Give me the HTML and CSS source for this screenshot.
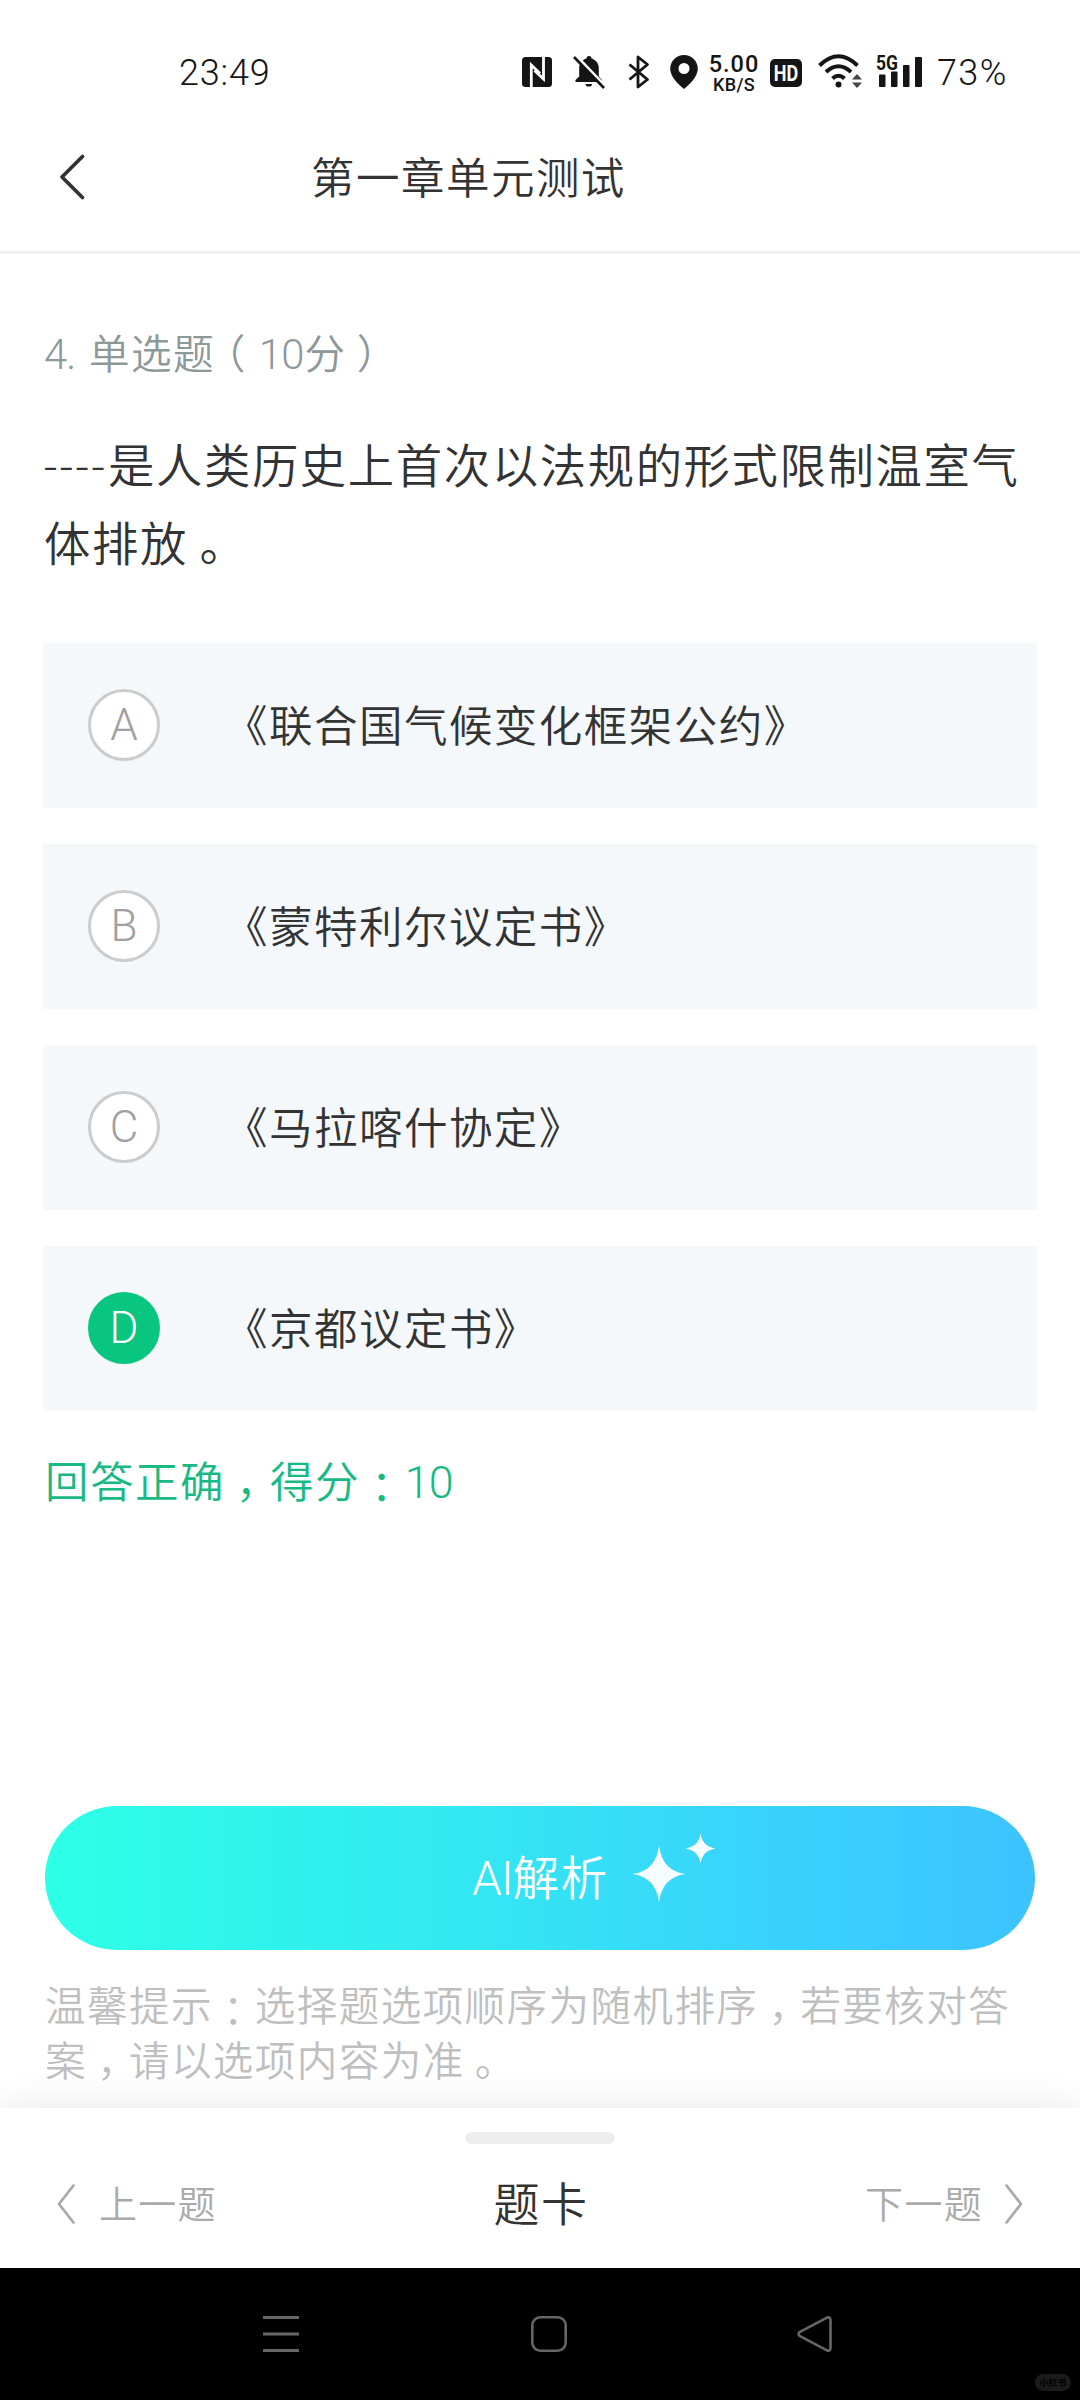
FILE: index.html
```html
<!DOCTYPE html>
<html lang="zh-CN">
<head>
<meta charset="utf-8">
<title>第一章单元测试</title>
<link rel="stylesheet" href="styles.css">
</head>
<body>
<div class="statusbar">
  <span class="clock">23:49</span>
  <div class="indicators">
    <svg class="i-nfc" width="30" height="30" viewBox="0 0 30 30"><rect width="30" height="30" rx="3.5" fill="#151515"/><path d="M9.300 30V8L18 16.500M21.500 0V22L12.500 13.500" fill="none" stroke="#fff" stroke-width="2.800"/></svg>
    <svg class="i-bell" width="32" height="34" viewBox="0 0 32 34"><path d="M16 1c1.600 0 2.500 1 2.500 2.400 4.500 1.300 7.300 5 7.300 9.600v8.500l3.200 3.500v2H2.500v-2l3.700-3.500V13c0-4.600 2.800-8.300 7.300-9.600C13.500 2 14.400 1 16 1zM12.500 29h6.500a3.200 2.500 0 0 1-6.500 0z" fill="#151515"/><path d="M2.500 0L32.500 31.500" stroke="#fff" stroke-width="3"/><path d="M1 2L31 33" stroke="#151515" stroke-width="2.600"/></svg>
    <svg class="i-bt" width="22" height="34" viewBox="0 0 22 34"><path d="M1.500 9.500L19.500 24.500L10 32V2L19.500 9.500L1.500 24.500" fill="none" stroke="#151515" stroke-width="2.800" stroke-linejoin="round"/></svg>
    <svg class="i-pin" width="28" height="34" viewBox="0 0 28 34"><path fill-rule="evenodd" d="M14 0a13.800 13.800 0 0 1 13.800 13.800C27.800 22 19 30 14 34 9 30 .2 22 .2 13.800A13.800 13.800 0 0 1 14 0zm0 8a5.500 5.500 0 1 0 0 11 5.500 5.500 0 0 0 0-11z" fill="#151515"/></svg>
    <div class="speed"><span class="rate">5.00</span><span class="unit">KB/S</span></div>
    <span class="hd"><span>HD</span></span>
    <svg class="i-wifi" width="46" height="36" viewBox="0 0 46 36"><g fill="none" stroke="#151515" stroke-width="4"><path d="M1.500 11.500Q20.500-7 39.500 11.500"/><path d="M8 18Q20.500 6.500 33 18"/><path d="M14.500 24.500Q20.500 19 26.500 24.500"/></g><circle cx="20.500" cy="30.500" r="3" fill="#151515"/><path d="M34 25.500l5-5.500 5 5.500zM34 28.500h10l-5 5.500z" fill="#444"/></svg>
    <svg class="i-signal" width="48" height="34" viewBox="0 0 48 34"><g fill="#151515"><rect x="3" y="20.500" width="6.500" height="12.500" rx="1"/><rect x="15" y="17.500" width="6.500" height="15.500" rx="1"/><rect x="27" y="11" width="6.500" height="22" rx="1"/><rect x="39" y="3" width="7" height="30" rx="1"/></g><text class="net" x="0" y="16" textLength="22" lengthAdjust="spacingAndGlyphs">5G</text></svg>
    <span class="battery">73%</span>
  </div>
</div>

<header class="header">
  <svg class="back" width="26" height="46" viewBox="0 0 26 46"><path d="M23.500 2.500L3 23L23.500 43.500" fill="none" stroke="#333" stroke-width="3.800" stroke-linecap="round" stroke-linejoin="round"/></svg>
  <h1 class="title">第一章单元测试</h1>
</header>

<main class="content">
  <p class="type"><span class="latin num">4.</span>单选题<span class="punct">（</span><span class="latin score">10</span>分<span class="punct">）</span></p>
  <p class="question"><span class="dashes">----</span>是人类历史上首次以法规的形式限制温室气<br>体排放<span class="punct">。</span></p>
  <ul class="options">
    <li class="option"><span class="mark">A</span><span class="answer">《联合国气候变化框架公约》</span></li>
    <li class="option"><span class="mark">B</span><span class="answer">《蒙特利尔议定书》</span></li>
    <li class="option"><span class="mark">C</span><span class="answer">《马拉喀什协定》</span></li>
    <li class="option"><span class="mark chosen">D</span><span class="answer">《京都议定书》</span></li>
  </ul>
  <p class="result">回答正确<span class="punct">，</span>得分<span class="punct colon">：</span><span class="latin">10</span></p>
  <button class="ai">
    <span class="label"><span class="latin">AI</span>解析</span>
    <svg width="84" height="70" viewBox="0 0 84 70" fill="#f6fcff"><path d="M27 13Q30.500 38 53.500 41Q30.500 44 27 69Q23.500 44 .5 41Q23.500 38 27 13z"/><path d="M68.500.5Q70.500 13.500 83.500 15.500Q70.500 17.500 68.500 30.500Q66.500 17.500 53.500 15.500Q66.500 13.500 68.500.5z"/></svg>
  </button>
  <p class="tip">温馨提示<span class="punct colon">：</span>选择题选项顺序为随机排序<span class="punct">，</span>若要核对答<br>案<span class="punct">，</span>请以选项内容为准<span class="punct">。</span></p>
</main>

<footer class="sheet">
  <div class="handle"></div>
  <div class="pager">
    <div class="step"><svg width="18" height="40" viewBox="0 0 18 40"><path d="M16.500 1.500L2 20L16.500 38.500" fill="none" stroke="#aaa" stroke-width="2.800" stroke-linecap="round" stroke-linejoin="round"/></svg><span>上一题</span></div>
    <span class="card">题卡</span>
    <div class="step next"><span>下一题</span><svg width="18" height="40" viewBox="0 0 18 40"><path d="M1.500 1.500L16 20L1.500 38.500" fill="none" stroke="#aaa" stroke-width="2.800" stroke-linecap="round" stroke-linejoin="round"/></svg></div>
  </div>
</footer>

<nav class="sysnav">
  <svg width="36" height="36" viewBox="0 0 36 36"><path d="M0 1.500H36M0 18H36M0 34.500H36" stroke="#666" stroke-width="3"/></svg>
  <svg width="38" height="36" viewBox="0 0 38 36"><rect x="3.300" y="1.300" width="33.400" height="33.400" rx="8" fill="none" stroke="#666" stroke-width="2.600"/></svg>
  <svg width="36" height="36" viewBox="0 0 36 36"><path d="M29.500 1.800Q33.500.2 33.500 4.500V31.500Q33.500 35.800 29.500 34.200L3 20.200Q.2 18 3 15.800z" fill="none" stroke="#666" stroke-width="2.600" stroke-linejoin="round"/></svg>
  <span class="watermark">小红书</span>
</nav>
</body>
</html>
```
FILE: styles.css
```css
* { box-sizing: border-box; margin: 0; padding: 0; }

body {
  width: 1080px;
  height: 2400px;
  display: flex;
  flex-direction: column;
  background: #fff;
  color: #333;
  font-family: "Noto Sans CJK SC", sans-serif;
  font-weight: 350;
  text-spacing-trim: space-all;
  overflow: hidden;
}
svg { display: block; flex: none; overflow: visible; }
.title, .type, .question, .answer, .result, .label, .tip, .step, .card { letter-spacing: .034em; }

/* system status bar */
.statusbar {
  height: 104px;
  padding: 40px 0 0 179px;
  display: flex;
  align-items: flex-start;
  color: #151515;
  font-family: Roboto, sans-serif;
}
.clock, .battery { font-size: 36px; line-height: 66px; font-weight: 300; letter-spacing: .8px; }
.clock { width: 343px; }
.indicators { display: flex; align-items: flex-start; }
.i-nfc { margin-top: 17px; }
.i-bell { margin: 15px 0 0 21px; }
.i-bt { margin: 15px 0 0 23px; }
.i-pin { margin: 15px 0 0 20px; }
.speed {
  width: 52px;
  margin: 13px 0 0 10px;
  display: flex;
  flex-direction: column;
  align-items: center;
  font-weight: 500;
}
.rate { font-size: 23.5px; line-height: 23px; letter-spacing: 1px; }
.unit { font-size: 18px; line-height: 17px; letter-spacing: .3px; }
.hd {
  width: 32px;
  height: 28px;
  margin: 19px 0 0 10px;
  border-radius: 5px;
  background: #151515;
  color: #fff;
  display: flex;
  align-items: center;
  justify-content: center;
  font-size: 22px;
  font-weight: 700;
}
.hd span { transform: scaleX(.82); }
.i-wifi { margin: 14px 0 0 16px; }
.i-signal { margin: 14px 0 0 12px; }
.net {
  font-size: 21px;
  font-weight: 700;
  fill: #151515;
  stroke: #fff;
  stroke-width: 2px;
  paint-order: stroke;
}
.battery { margin-left: 13px; letter-spacing: 1.4px; }

/* page header */
.header {
  height: 150px;
  border-bottom: 3px solid #f1f1f1;
  padding-left: 59px;
  display: flex;
  align-items: center;
}
.back { margin-bottom: 1px; }
.title {
  margin: 0 0 3px 226px;
  font-size: 43.5px;
  line-height: 60px;
  font-weight: inherit;
}

.content { height: 1854px; padding: 68px 43px 0; }
.latin {
  font-family: Roboto, sans-serif;
  font-size: 1.03em;
  line-height: 0;
  letter-spacing: -.02em;
}
/* half-width punctuation glyphs centred in a full-width cell */
.punct {
  padding: 0 .25em;
  font-feature-settings: "halt";
}
.colon { vertical-align: -3px; line-height: 0; }

.type {
  height: 60px;
  padding-left: 1px;
  font-size: 40.6px;
  line-height: 60px;
  color: #8d9899;
}
.num { display: inline-block; width: 45px; }
.score { margin: 0 1px 0 2px; }
.question {
  height: 156px;
  margin-top: 42px;
  padding-left: 1px;
  font-size: 46.4px;
  line-height: 78px;
  white-space: nowrap;
}
.dashes {
  display: inline-block;
  width: 64px;
  font-family: Roboto, sans-serif;
  line-height: 1;
  letter-spacing: 2.500px;
}

.options { margin-top: 63px; display: grid; gap: 36px; list-style: none; }
.option {
  height: 165px;
  padding-left: 45px;
  display: flex;
  align-items: center;
  gap: 63px;
  background: #f4f8fb;
  font-size: 43.5px;
}
.answer { margin: 0 0 5px 1px; }
.mark {
  width: 72px;
  height: 72px;
  margin-bottom: 1px;
  border: 3px solid #ccc;
  border-radius: 50%;
  background: #fff;
  color: #a0a0a0;
  display: flex;
  align-items: center;
  justify-content: center;
  font: 350 44px/66px Roboto, sans-serif;
}
.chosen { background: #08c67f; border-color: #08c67f; color: #fff; }
.result {
  height: 60px;
  margin-top: 39px;
  padding-left: 2px;
  font-size: 43.5px;
  line-height: 60px;
  color: #19b983;
}

.ai {
  width: 990px;
  height: 144px;
  margin: 296px 0 0 2px;
  border: 0;
  border-radius: 72px;
  background: linear-gradient(90deg, #2dffe6, #33e6f2 45%, #39d3fc 72%, #3cc3ff);
  color: #fff;
  display: flex;
  padding-left: 427px;
  align-items: center;
  font: inherit;
  font-size: 46.400px;
}
.label { width: 138px; margin-bottom: 7px; white-space: nowrap; text-align: left; }
.ai svg { margin: -21px 0 0 22px; }
.tip {
  margin: 27px 0 0 2px;
  font-size: 40.6px;
  line-height: 54.600px;
  color: #bfbfbf;
  white-space: nowrap;
}

/* bottom sheet */
.sheet {
  height: 160px;
  padding: 24px 57px 0;
  background: #fff;
  box-shadow: 0 0 36px rgba(0, 0, 0, .1);
}
.handle {
  width: 150px;
  height: 12px;
  margin: 0 auto;
  border-radius: 6px;
  background: #eee;
}
.pager {
  height: 120px;
  display: flex;
  align-items: center;
  justify-content: space-between;
}
.step {
  display: flex;
  align-items: center;
  gap: 24px;
  font-size: 38px;
  color: #aaa;
}
.next { gap: 22px; }
.step span, .card { margin-bottom: 6px; }
.card { font-size: 46px; }

/* system navigation */
.sysnav {
  position: relative;
  height: 132px;
  padding-left: 263px;
  display: flex;
  align-items: center;
  gap: 230px;
  background: #000;
}
.watermark {
  position: absolute;
  right: 9px;
  bottom: 9px;
  width: 36px;
  height: 17px;
  border-radius: 9px;
  background: #1b1b1b;
  color: #000;
  font-size: 9px;
  line-height: 17px;
  font-weight: 700;
  text-align: center;
}
```
